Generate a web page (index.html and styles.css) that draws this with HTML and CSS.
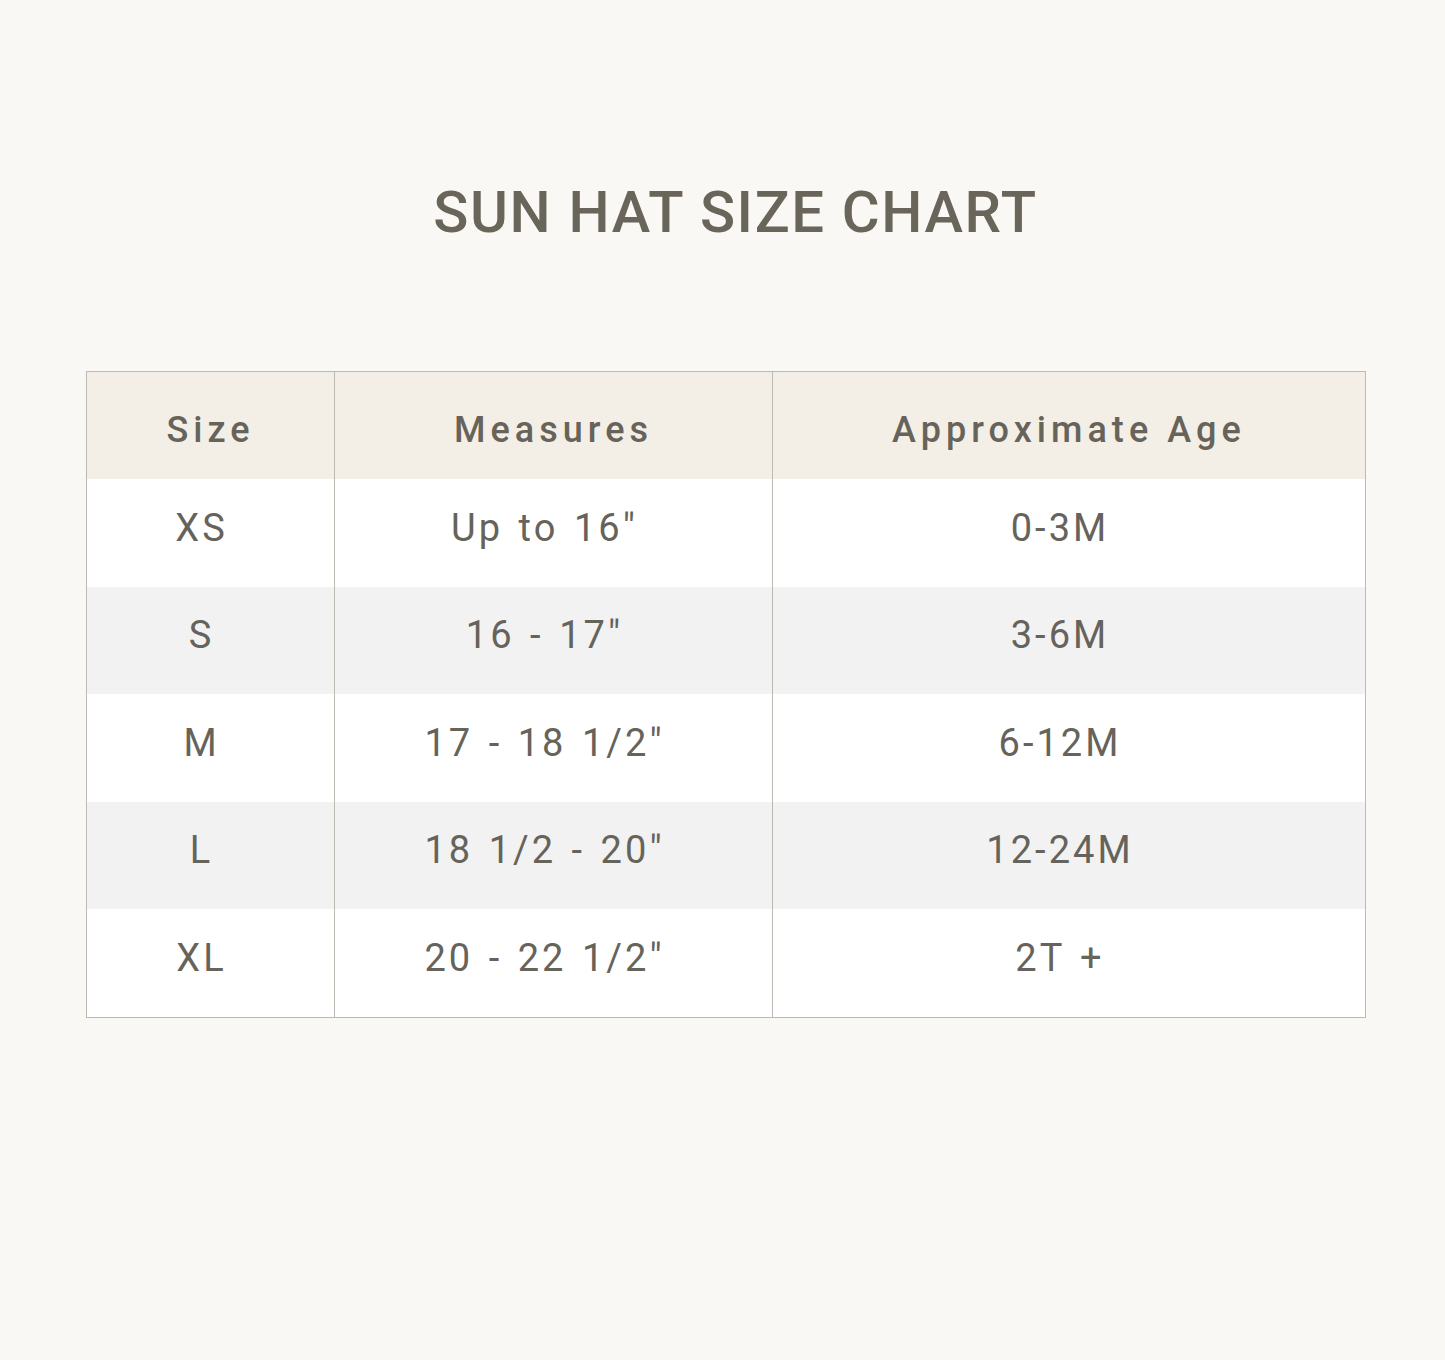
FILE: index.html
```html
<!DOCTYPE html>
<html>
<head>
<meta charset="utf-8">
<link rel="stylesheet" href="styles.css">
</head>
<body>
<main class="page">
  <h1 class="title">SUN HAT SIZE CHART</h1>
  <table class="chart">
    <colgroup>
      <col class="c1"><col class="c2"><col class="c3">
    </colgroup>
    <thead>
      <tr><th>Size</th><th>Measures</th><th>Approximate Age</th></tr>
    </thead>
    <tbody>
      <tr><td>XS</td><td>Up to 16"</td><td>0-3M</td></tr>
      <tr class="alt"><td>S</td><td>16 - 17"</td><td>3-6M</td></tr>
      <tr><td>M</td><td>17 - 18 1/2"</td><td>6-12M</td></tr>
      <tr class="alt"><td>L</td><td>18 1/2 - 20"</td><td>12-24M</td></tr>
      <tr><td>XL</td><td>20 - 22 1/2"</td><td>2T +</td></tr>
    </tbody>
  </table>
</main>
</body>
</html>
```
FILE: styles.css
```css
html, body {
  margin: 0;
  padding: 0;
  background: #f9f8f4;
}
.page {
  width: 1445px;
  height: 1360px;
  padding-top: 180px;
  box-sizing: border-box;
  font-family: Roboto, "Liberation Sans", sans-serif;
  color: #64615a;
}
.title {
  margin: 0;
  text-align: center;
  font-size: 58px;
  font-weight: 500;
  letter-spacing: 0.028em;
  line-height: 64px;
  color: #6a655b;
  padding-left: 26px;
}
.chart {
  margin: 127px 0 0 86px;
  width: 1279px;
  border-collapse: collapse;
  table-layout: fixed;
  border: 1px solid #bdbab3;
}
.c1 { width: 248px; }
.c2 { width: 438px; }
.c3 { width: 593px; }
.chart th, .chart td {
  border-left: 1px solid #bdbab3;
  border-right: 1px solid #bdbab3;
  text-align: center;
  padding: 0;
}
.chart th {
  height: 99px;
  background: #f3efe6;
  font-size: 36px;
  font-weight: 500;
  letter-spacing: 0.14em;
  color: #67635a;
  padding-top: 8px;
}
.chart td {
  height: 97.5px;
  background: #ffffff;
  font-size: 38px;
  font-weight: 400;
  letter-spacing: 0.08em;
  word-spacing: 3px;
  color: #66635b;
  padding-right: 18px;
  padding-bottom: 10px;
}
.chart tr.alt td {
  background: #f2f2f2;
}
```
